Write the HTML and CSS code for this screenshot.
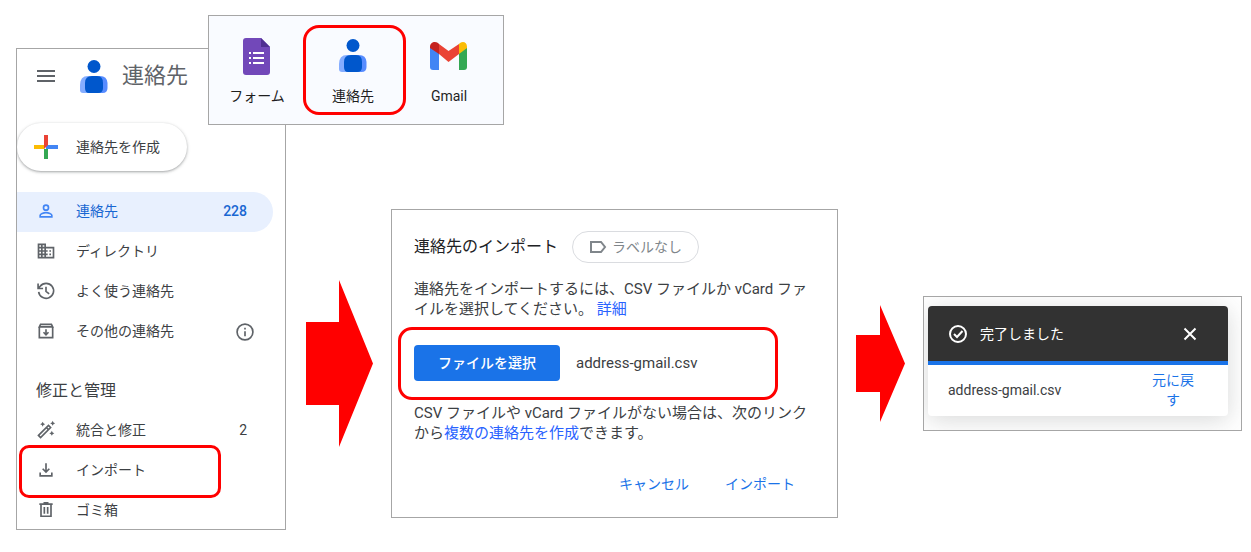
FILE: index.html
```html
<!DOCTYPE html>
<html lang="ja">
<head>
    <meta charset="UTF-8">
    <meta name="viewport" content="width=device-width, initial-scale=1.0">
    <title>連絡先のインポート</title>
    <link rel="stylesheet" href="styles.css">
</head>
<body>
    <svg width="0" height="0" class="defs" aria-hidden="true">
        <symbol id="contacts-logo" viewBox="0 0 28 33">
            <circle cx="14" cy="6.5" r="6.5" fill="#0057cc"/>
            <path d="M8 16h10v17H3q-3 0-3-3v-5q0-9 8-9z" fill="#85adff"/>
            <path d="M12 16h8q7 0 7.500 7v5q0 5-5 5h-10z" fill="#578cff"/>
            <path d="M12 16h5q6 0 6 7v5q0 5-5 5H9q-4 0-4-5v-5q0-7 7-7z" fill="#0057cc"/>
        </symbol>
    </svg>
    <main class="flow">
        <div class="contacts">
            <div class="sidebar">
                <header class="sidebar-header">
                    <button class="icon-button" aria-label="メニュー">
                        <svg width="24" height="24" viewBox="0 0 24 24" fill="#5f6368"><path d="M3 18h18v-2H3zm0-5h18v-2H3zm0-7v2h18V6z"/></svg>
                    </button>
                    <svg class="logo" width="28" height="33"><use href="#contacts-logo"/></svg>
                    <h1>連絡先</h1>
                </header>
                <button class="create">
                    <svg width="24" height="24" viewBox="0 0 24 24">
                        <path fill="#34a853" d="M10 14h4v10h-4z"/>
                        <path fill="#4285f4" d="M12 10h12v4H12z"/>
                        <path fill="#fbbc04" d="M0 10h12l-2 4H0z"/>
                        <path fill="#ea4335" d="M10 0h4v10l-4 4z"/>
                    </svg>
                    連絡先を作成
                </button>
                <nav>
                    <a class="row active" href="#">
                        <svg class="icon" viewBox="0 0 24 24"><circle cx="12" cy="8" r="3"/><path d="M5 19v-2c0-1.500 4-3 7-3s7 1.500 7 3v2z"/></svg>
                        <span>連絡先</span>
                        <span class="count">228</span>
                    </a>
                    <a class="row" href="#">
                        <svg class="icon solid" viewBox="0 0 24 24"><path d="M12 7V3H2v18h20V7H12zM6 19H4v-2h2v2zm0-4H4v-2h2v2zm0-4H4V9h2v2zm0-4H4V5h2v2zm4 12H8v-2h2v2zm0-4H8v-2h2v2zm0-4H8V9h2v2zm0-4H8V5h2v2zm10 12h-8v-2h2v-2h-2v-2h2v-2h-2V9h8v10zm-2-8h-2v2h2v-2zm0 4h-2v2h2v-2z"/></svg>
                        <span>ディレクトリ</span>
                    </a>
                    <a class="row" href="#">
                        <svg class="icon" viewBox="0 0 24 24"><path d="M3.200 13a9 9 0 1 0 1.800-6.700L3.500 8M2.500 3v6h6M12 7v5.500l3.800 3"/></svg>
                        <span>よく使う連絡先</span>
                    </a>
                    <div class="row">
                        <svg class="icon" viewBox="0 0 24 24"><path d="M4 7.500V20h16V7.500M4 7l1.500-3h13L20 7zM12 10v6M9 13.500l3 3 3-3"/></svg>
                        <a href="#">その他の連絡先</a>
                        <button class="icon-button info" aria-label="情報">
                            <svg class="icon" viewBox="0 0 24 24"><circle cx="12" cy="12" r="9.500"/><path d="M12 11v6M12 7v2"/></svg>
                        </button>
                    </div>
                    <h2>修正と管理</h2>
                    <a class="row" href="#">
                        <svg class="icon" viewBox="0 0 24 24"><path d="M3 18.500L15 6.500l2.500 2.500-12 12zM12.500 9l2.500 2.500"/><path class="fill" d="M8 2l1 2 2 1-2 1-1 2-1-2-2-1 2-1zM20 1l1 2 2 1-2 1-1 2-1-2-2-1 2-1zM19 13l1 2 2 1-2 1-1 2-1-2-2-1 2-1z"/></svg>
                        <span>統合と修正</span>
                        <span class="count">2</span>
                    </a>
                    <a class="row row-import" href="#">
                        <svg class="icon" viewBox="0 0 24 24"><path d="M12 4v10M8 10.500l4 4 4-4M5 15v4h14v-4"/></svg>
                        <span>インポート</span>
                    </a>
                    <a class="row" href="#">
                        <svg class="icon" viewBox="0 0 24 24"><path d="M6 5v14.500h12V5M4 5h16M9 3.500h6M10 8.500v8M14 8.500v8"/></svg>
                        <span>ゴミ箱</span>
                    </a>
                </nav>
            </div>
            <div class="launcher">
                <a class="app" href="#">
                    <svg width="28" height="40" viewBox="0 0 28 40">
                        <path fill="#7248b9" d="M3 2h15l9 9v25q0 3-3 3H3q-3 0-3-3V5q0-3 3-3z"/>
                        <path fill="#4f2f91" d="M18 2l9 9h-9z"/>
                        <path fill="#fff" d="M6 16h2v2H6zm4 0h11v2H10zM6 21h2v2H6zm4 0h11v2H10zM6 26h2v2H6zm4 0h11v2H10z"/>
                    </svg>
                    フォーム
                </a>
                <a class="app selected" href="#">
                    <svg width="28" height="40" viewBox="0 0 28 40"><use href="#contacts-logo" y="3" width="28" height="33"/></svg>
                    連絡先
                </a>
                <a class="app" href="#">
                    <svg width="38" height="40" viewBox="0 0 38 40">
                        <path fill="#4285f4" d="M0 11l9 6v17H3q-3 0-3-3z"/>
                        <path fill="#34a853" d="M29 17l8-6v20q0 3-3 3h-5z"/>
                        <path fill="#ea4335" d="M9 8l9.500 7L29 8v10l-10.500 8L9 18z"/>
                        <path fill="#c5221f" d="M0 11C0 6 5 5 8 7l1 1v10l-9-6z"/>
                        <path fill="#fbbc04" d="M29 8l1-1c3-2 7-1 7 4v1l-8 6z"/>
                    </svg>
                    Gmail
                </a>
            </div>
        </div>

        <div class="steps">
            <svg class="arrow" width="67" height="167" viewBox="0 0 67 167"><path d="M0 42h33V0l34 83.500L33 167v-42H0z"/></svg>

            <section class="dialog">
                <div class="dialog-header">
                    <h2>連絡先のインポート</h2>
                    <button class="chip">
                        <svg width="18" height="18" viewBox="0 0 18 18"><path d="M2 4h10l4 5-4 5H2z"/></svg>
                        ラベルなし
                    </button>
                </div>
                <p>連絡先をインポートするには、CSV ファイルか vCard ファイルを選択してください。 <a href="#">詳細</a></p>
                <div class="file">
                    <button class="primary">ファイルを選択</button>
                    <span>address-gmail.csv</span>
                </div>
                <p>CSV ファイルや vCard ファイルがない場合は、次のリンクから<a href="#">複数の連絡先を作成</a>できます。</p>
                <div class="actions">
                    <button>キャンセル</button>
                    <button>インポート</button>
                </div>
            </section>

            <svg class="arrow" width="49" height="117" viewBox="0 0 49 117"><path d="M0 30h24V0l25 58.500L24 117V87H0z"/></svg>

            <section class="result">
                <div class="toast">
                    <div class="toast-header">
                        <svg width="20" height="20" viewBox="0 0 20 20"><circle cx="10" cy="10" r="8"/><path d="M6 10l3 3 5.500-6"/></svg>
                        <span>完了しました</span>
                        <button class="icon-button" aria-label="閉じる">
                            <svg width="20" height="20" viewBox="0 0 20 20"><path d="M4.500 4.500l11 11M15.500 4.500l-11 11"/></svg>
                        </button>
                    </div>
                    <div class="toast-body">
                        <span>address-gmail.csv</span>
                        <button>元に戻す</button>
                    </div>
                </div>
            </section>
        </div>
    </main>
</body>
</html>
```
FILE: styles.css
```css
*, *::after {
    box-sizing: border-box;
}
body {
    margin: 0;
    background-color: #fff;
    color: #3c4043;
    font-family: Roboto, "Noto Sans CJK JP", sans-serif;
    font-size: 14px;
    line-height: 20px;
}
h1, h2, p {
    margin: 0;
    font-weight: 400;
}
a {
    color: inherit;
    text-decoration: none;
}
button {
    padding: 0;
    border: none;
    background: none;
    color: inherit;
    font: inherit;
    cursor: pointer;
}
svg {
    flex: none;
}
.defs {
    position: absolute;
}
.icon-button {
    display: flex;
}
.flow {
    display: flex;
    align-items: flex-start;
    gap: 20px;
    padding: 48px 9px 22px 16px;
}

/* contacts sidebar */
.contacts {
    position: relative;
    flex: 0 0 270px;
}
.sidebar {
    overflow: hidden;
    border: 1px solid #a6a6a6;
}
.sidebar-header {
    display: flex;
    align-items: center;
    height: 54px;
    padding-left: 17px;
}
.sidebar-header h1 {
    margin-left: 14px;
    color: #5f6368;
    font-size: 22px;
}
.logo {
    margin-left: 22px;
}
.create {
    display: flex;
    align-items: center;
    gap: 18px;
    width: 170px;
    height: 48px;
    margin: 20px 0 21px;
    padding-left: 17px;
    border-radius: 24px;
    background-color: #fff;
    box-shadow: 0 1px 2px rgba(60,64,67,0.3), 0 1px 3px 1px rgba(60,64,67,0.15);
}
nav {
    margin-bottom: -2px;
}
nav h2 {
    padding: 29px 19px 10px;
    font-size: 16px;
}
.row {
    position: relative;
    display: flex;
    align-items: center;
    gap: 20px;
    height: 40px;
    margin-right: 12px;
    padding: 0 26px 2px 19px;
}
.active {
    border-radius: 0 20px 20px 0;
    background-color: #e8f0fe;
    color: #1967d2;
}
.count {
    margin-left: auto;
}
.active .count {
    font-weight: 500;
}
.info {
    margin: 2px -8px 0 auto;
}
.icon {
    width: 20px;
    height: 20px;
    fill: none;
    stroke: #5f6368;
    stroke-width: 2;
}
.active .icon {
    stroke: #4285f4;
}
.icon.solid, .icon .fill {
    fill: #5f6368;
    stroke: none;
}

/* red markers */
.row-import::after, .selected::after, .file::after {
    content: "";
    position: absolute;
    border: 3px solid #f00;
    border-radius: 10px;
    pointer-events: none;
}
.row-import::after {
    top: -6px;
    bottom: -7px;
    left: 2px;
    width: 202px;
}
.selected::after {
    top: 9px;
    bottom: 9px;
    left: -2px;
    width: 103px;
    border-radius: 16px;
}
.file::after {
    top: -18px;
    bottom: -19px;
    left: -16px;
    width: 380px;
    border-radius: 14px;
}

/* app launcher */
.launcher {
    position: absolute;
    top: -33px;
    left: 192px;
    display: flex;
    width: 296px;
    height: 110px;
    border: 1px solid #a6a6a6;
    background-color: #f9fbff;
}
.app {
    position: relative;
    display: flex;
    flex: 0 0 96px;
    flex-direction: column;
    align-items: center;
    gap: 10px;
    padding-top: 20px;
    color: #1f1f1f;
}

/* import dialog */
.steps {
    display: flex;
    flex: 1;
    align-items: center;
    gap: 18px;
    margin-top: 161px;
}
.arrow {
    fill: #f00;
}
.dialog {
    flex: 1;
    padding: 21px 20px 15px 22px;
    border: 1px solid #a6a6a6;
    color: #3c4043;
    font-size: 15px;
}
.dialog-header {
    display: flex;
    align-items: center;
    gap: 14px;
    margin-bottom: 16px;
}
.dialog-header h2 {
    color: #202124;
    font-size: 16px;
}
.chip {
    display: flex;
    align-items: center;
    gap: 5px;
    height: 32px;
    padding: 0 16px;
    border: 1px solid #dadce0;
    border-radius: 16px;
    color: #80868b;
    font-size: 14px;
}
.chip svg {
    fill: none;
    stroke: #80868b;
    stroke-width: 2;
}
.dialog p a {
    color: #2962ff;
}
.file {
    position: relative;
    display: flex;
    align-items: center;
    gap: 16px;
    margin: 26px 0 22px;
}
.primary {
    height: 36px;
    padding: 0 24px;
    border-radius: 4px;
    background-color: #1a73e8;
    color: #fff;
    font-size: 14px;
    font-weight: 500;
}
.actions {
    display: flex;
    justify-content: flex-end;
    gap: 36px;
    margin-top: 23px;
    padding-right: 22px;
}
.actions button {
    height: 36px;
    color: #1a73e8;
    font-size: 14px;
}

/* result toast */
.result {
    flex: 0 1 319px;
    overflow: hidden;
    padding: 9px 13px 14px 4px;
    border: 1px solid #a6a6a6;
}
.toast {
    border-radius: 4px;
    background-color: #fff;
    box-shadow: 0 4px 24px rgba(60,64,67,0.2);
}
.toast-header {
    display: flex;
    align-items: center;
    gap: 12px;
    height: 59px;
    padding: 0 28px 0 20px;
    border-bottom: 4px solid #1a73e8;
    border-radius: 4px 4px 0 0;
    background-color: #323232;
    color: #fff;
}
.toast-header svg {
    fill: none;
    stroke: #fff;
    stroke-width: 2;
}
.toast-header .icon-button {
    margin-left: auto;
}
.toast-body {
    display: flex;
    align-items: center;
    justify-content: space-between;
    height: 51px;
    padding: 0 30px 2px 20px;
}
.toast-body button {
    width: 50px;
    color: #1a73e8;
}
```
